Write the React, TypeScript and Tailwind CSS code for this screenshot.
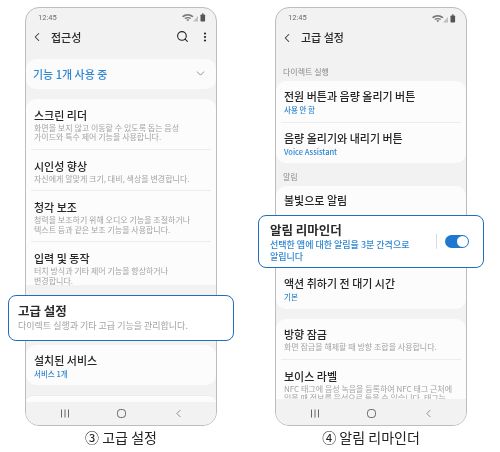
import React from 'react';
import { ChevronDown, ChevronLeft, MoreVertical, Search } from 'lucide-react';

const font = "font-['Noto_Sans_CJK_KR','Noto_Sans',sans-serif]";

// Small wifi / signal / battery cluster in the status bar
const StatusIcons: React.FC = () => (
  <svg width="25" height="9" viewBox="0 0 25 9" className="text-[#777]">
    <path d="M1 3.2 C4.5 0.2 9 0.2 12.5 3.2 L11.4 4.3 C8.6 2.2 5 2.2 2.1 4.3 Z" fill="currentColor" />
    <path d="M3.4 5.1 C5.4 3.6 8.2 3.6 10.2 5.1 L9.2 6 C7.6 5 6 5 4.4 6 Z" fill="currentColor" />
    <path d="M5.4 6.7 C6.2 6.2 7.4 6.2 8.2 6.7 L6.8 8.2 Z" fill="currentColor" />
    <path d="M12 8.5 L17 3 V8.5 Z" fill="#c0c0c0" />
    <rect x="19.5" y="1.5" width="4.6" height="7" rx="0.8" fill="#555" />
    <rect x="21" y="0.4" width="1.6" height="1.2" fill="#555" />
  </svg>
);

const Row: React.FC<{ title: string; desc?: string[]; sub?: string; tight?: boolean }> = ({ title, desc, sub, tight }) => (
  <div className={tight ? 'px-[8px] pt-[7px]' : 'px-[8px] pt-[8px]'}>
    <div className="text-[11px] leading-[16px] font-medium text-[#252525]">{title}</div>
    {sub && <div className="text-[7.5px] leading-[11px] font-medium text-[#2f86d1]">{sub}</div>}
    {desc?.map(line => (
      <div key={line} className="text-[8px] leading-[9.5px] text-[#a3a3a3] whitespace-nowrap">{line}</div>
    ))}
  </div>
);

const Divider: React.FC<{ tight?: boolean }> = ({ tight }) => (
  <div className={tight ? 'h-px mx-[5px] mt-[6.5px] bg-[#ececec]' : 'h-px mx-[5px] mt-[7px] bg-[#ececec]'} />
);

const Nav: React.FC = () => (
  <div className="mt-auto h-[23px] shrink-0 bg-[#f2f2f2] rounded-b-[13px] flex items-center justify-between pl-[34px] pr-[31px]">
    <svg width="10" height="9" viewBox="0 0 10 9" className="text-[#666]">
      <path d="M1.5 0.5V8.5M5 0.5V8.5M8.5 0.5V8.5" stroke="currentColor" strokeWidth="1" />
    </svg>
    <div className="w-[9px] h-[9px] rounded-[3.5px] border border-[#666]" />
    <ChevronLeft size={13} strokeWidth={1.3} className="text-[#666]" />
  </div>
);

const StatusBar: React.FC = () => (
  <div className="h-[17px] pt-[3px] pl-[12px] pr-[10px] flex items-center justify-between">
    <span className="text-[7.5px] text-[#6a6a6a] font-['Roboto',sans-serif]">12:45</span>
    <StatusIcons />
  </div>
);

const Phone: React.FC<{ children: React.ReactNode }> = ({ children }) => (
  <div className="w-[192px] h-[419px] flex flex-col rounded-[14px] border border-[#bdbdbd] bg-[#f2f2f2]">
    <StatusBar />
    {children}
    <Nav />
  </div>
);

const Caption: React.FC<{ children: React.ReactNode }> = ({ children }) => (
  <div className="h-[26px] text-center text-[14px] leading-[22px] text-[#222]">{children}</div>
);

const App: React.FC = () => (
  <div className={`${font} w-[500px] h-[452px] bg-white overflow-hidden flex pt-[7px] pl-[25px] gap-[58px] blur-[0.3px]`}>
    {/* 고급 설정 */}
    <div className="w-[192px]">
      <Phone>
        <div className="h-[25px] pl-[4px] pr-[5px] flex items-center text-[#333]">
          <ChevronLeft size={14} strokeWidth={1.8} />
          <span className="ml-[7px] text-[11px] font-medium text-[#2a2a2a]">접근성</span>
          <Search size={13} strokeWidth={2} className="ml-auto mr-[10px] text-[#222]" />
          <MoreVertical size={12} strokeWidth={2.4} className="text-[#222]" />
        </div>
        <div className="mt-[10px] h-[30px] bg-[#fbfbfb] rounded-[10px] flex items-center justify-between pl-[7px] pr-[9px]">
          <span className="text-[11px] font-medium text-[#2f86d1]">기능 1개 사용 중</span>
          <ChevronDown size={13} strokeWidth={1.3} className="text-[#666]" />
        </div>
        <div className="mt-[10px] bg-[#fcfcfc] rounded-t-[10px]">
          <Row title="스크린 리더" desc={['화면을 보지 않고 이동할 수 있도록 돕는 음성', '가이드와 특수 제어 기능을 사용합니다.']} />
          <Divider />
          <Row title="시인성 향상" desc={['자신에게 알맞게 크기, 대비, 색상을 변경합니다.']} />
          <Divider />
          <Row title="청각 보조" desc={['청력을 보조하기 위해 오디오 기능을 조절하거나', '텍스트 등과 같은 보조 기능을 사용합니다.']} />
          <Divider />
          <Row title="입력 및 동작" desc={['터치 방식과 기타 제어 기능을 향상하거나', '변경합니다.']} />
        </div>
        <div className="relative z-10 -mx-[18px] mt-[9.5px] h-[47px] bg-white rounded-[8px] border-[1.5px] border-[#1f6fc0] pl-[9px] pt-[6.5px]">
          <div className="text-[12.5px] leading-[18px] font-bold text-[#2a2a2a]">고급 설정</div>
          <div className="text-[9px] leading-[12px] text-[#a3a3a3]">다이렉트 실행과 기타 고급 기능을 관리합니다.</div>
        </div>
        <div className="mt-[4px] h-[41px] bg-[#fcfcfc] rounded-[10px]">
          <Row tight title="설치된 서비스" sub="서비스 1개" />
        </div>
        <div className="mt-[10px] h-[7px] bg-[#fcfcfc] rounded-t-[10px] border-t border-[#ececec]" />
      </Phone>
      <Caption>③ 고급 설정</Caption>
    </div>
    {/* 알림 리마인더 */}
    <div className="w-[192px]">
      <Phone>
        <div className="h-[25px] pl-[4px] flex items-center text-[#333]">
          <ChevronLeft size={14} strokeWidth={1.8} />
          <span className="ml-[7px] text-[11px] font-medium text-[#2a2a2a]">고급 설정</span>
        </div>
        <div className="mt-[16px] pl-[7px] text-[8px] leading-[12px] text-[#8a8a8a]">다이렉트 실행</div>
        <div className="mt-[3px] bg-[#fcfcfc] rounded-[10px] pb-[6.5px]">
          <Row tight title="전원 버튼과 음량 올리기 버튼" sub="사용 안 함" />
          <Divider tight />
          <Row tight title="음량 올리기와 내리기 버튼" sub="Voice Assistant" />
        </div>
        <div className="mt-[8px] pl-[7px] text-[8px] leading-[12px] text-[#8a8a8a]">알림</div>
        <div className="mt-[3px] h-[29px] pt-[6px] px-[8px] bg-[#fcfcfc] rounded-t-[10px] text-[11px] leading-[16px] font-medium text-[#252525]">
          불빛으로 알림
        </div>
        <div className="relative z-10 -mx-[18px] h-[53px] bg-white rounded-[8px] border-[1.5px] border-[#1f6fc0] pl-[11px] pr-[14px] flex items-center">
          <div className="flex-1">
            <div className="text-[12.5px] leading-[18px] font-bold text-[#2a2a2a]">알림 리마인더</div>
            <div className="text-[9px] leading-[11.5px] font-medium text-[#2f86d1] w-[150px] break-keep">선택한 앱에 대한 알림을 3분 간격으로 알립니다</div>
          </div>
          <div className="w-px h-[15px] bg-[#dcdcdc] mr-[8px]" />
          <div className="w-[24px] h-[13px] rounded-full bg-[#1f77d0] flex items-center justify-end pr-[1px]">
            <div className="w-[11px] h-[11px] rounded-full bg-white" />
          </div>
        </div>
        <div className="h-[41px] bg-[#fcfcfc] rounded-b-[10px]">
          <Row tight title="액션 취하기 전 대기 시간" sub="기본" />
        </div>
        <div className="mt-[10px] h-[80px] overflow-hidden bg-[#fcfcfc] rounded-t-[10px]">
          <Row tight title="방향 잠금" desc={['화면 잠금을 해제할 때 방향 조합을 사용합니다.']} />
          <Divider />
          <Row title="보이스 라벨" desc={['NFC 태그에 음성 녹음을 등록하여 NFC 태그 근처에', '있을 때 정보를 음성으로 들을 수 있습니다. 태그는']} />
        </div>
      </Phone>
      <Caption>④ 알림 리마인더</Caption>
    </div>
  </div>
);

export default App;
